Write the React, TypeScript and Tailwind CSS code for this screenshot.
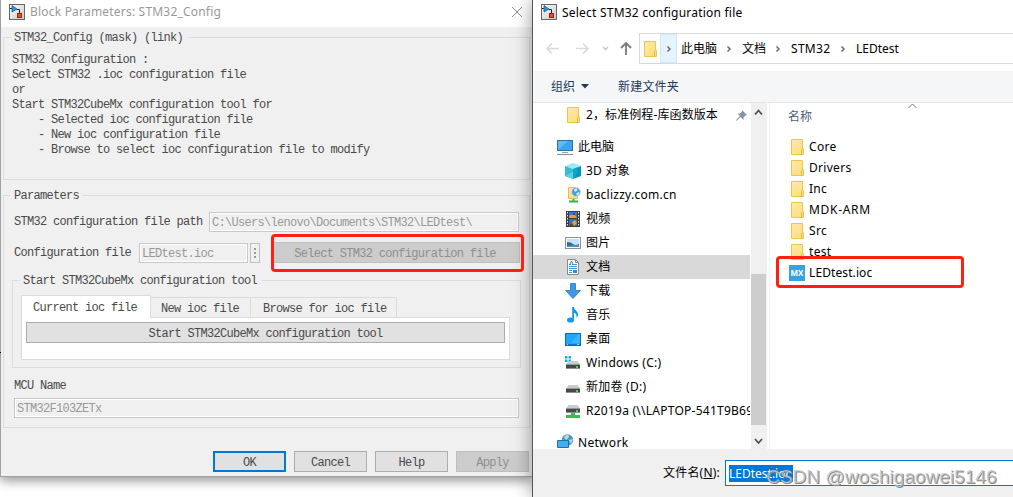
import React from 'react';
import clsx from 'clsx';

interface NavItem {
  label: string;
  icon: React.ReactNode;
}

interface FieldProps {
  value: string;
  className?: string;
}

interface ButtonProps {
  label: string;
  variant?: 'normal' | 'primary' | 'disabled';
  className?: string;
}

const SimulinkIcon = () => (
  <svg width="16" height="16" viewBox="0 0 16 16" className="shrink-0">
    <defs>
      <linearGradient id="sim" x1="0" y1="0" x2="1" y2="1">
        <stop offset="0" stopColor="#fff" />
        <stop offset="1" stopColor="#c4c8cc" />
      </linearGradient>
    </defs>
    <rect x=".5" y=".5" width="15" height="15" fill="url(#sim)" stroke="#666" />
    <path d="M1 4.500h2M8 5.500h2.500v4" fill="none" stroke="#222" />
    <path d="M3 1.500v6.500l5-3z" fill="#2e9bd6" stroke="#155a86" strokeWidth=".8" />
    <rect x="8.500" y="9.500" width="4" height="4" fill="#e8501e" stroke="#8c2a08" />
  </svg>
);

const FolderIcon = () => (
  <svg width="13" height="16" viewBox="0 0 13 16" className="shrink-0">
    <defs>
      <linearGradient id="folder" x1="0" y1="0" x2="1" y2="1">
        <stop offset="0" stopColor="#ffebaa" />
        <stop offset="1" stopColor="#fddb78" />
      </linearGradient>
    </defs>
    <path d="M.5.5h11v9h1v6H.5z" fill="url(#folder)" stroke="#ecc651" />
    <path d="M10.500 15.500v-5l1-1" fill="none" stroke="#e5b93c" />
  </svg>
);

const PcIcon = () => (
  <svg width="16" height="16" viewBox="0 0 16 16">
    <rect x=".5" y="1.500" width="15" height="10" fill="#5bbcf8" stroke="#33719c" />
    <path d="M1 11L11 2h4v9z" fill="#3aa6f2" />
    <path d="M5 13.500h6" stroke="#8ea3b1" />
    <path d="M0 15.500h16" stroke="#7d8f9d" />
  </svg>
);

const CubeIcon = () => (
  <svg width="16" height="16" viewBox="0 0 16 16">
    <path d="M0 3l8-3 8 3-8 3z" fill="#9deaf5" />
    <path d="M0 3l8 3v10l-8-3z" fill="#35bdd3" />
    <path d="M16 3L8 6v10l8-3z" fill="#0b95bd" />
    <path d="M8 6l4-1.500v6L8 16z" fill="#14a5c8" />
    <path d="M0 13l8-4v7z" fill="#5ad3e2" />
  </svg>
);

const NetFolderIcon = () => (
  <svg width="16" height="16" viewBox="0 0 16 16">
    <path d="M3.500.5h9v11h-9z" fill="#ffe391" stroke="#e5bd4b" />
    <circle cx="11" cy="5" r="4.500" fill="#4b9fd0" stroke="#cfe3ef" strokeWidth=".8" />
    <path d="M8.500 3l3-2 1 2-2 2zM11.500 6l3-1-1 3-2 .5z" fill="#d3edfb" />
    <path d="M4 14.500h9M8.500 12v3" stroke="#36b34a" strokeWidth="2" />
  </svg>
);

const VideoIcon = () => (
  <svg width="14" height="16" viewBox="0 0 14 16">
    <rect width="14" height="16" fill="#3b3b3b" />
    <path d="M1.500 1v14M12.500 1v14" stroke="#e8e8e8" strokeDasharray="1.500 1.500" />
    <rect x="3" y="1" width="8" height="6" fill="#4477cf" />
    <rect x="3" y="8" width="8" height="7" fill="#356ad0" />
    <path d="M4 4h5l2 3H3zM6 11l3-2 2 3-3 3z" fill="#dfa626" />
    <path d="M7 2h2v2H7zM4 13h3v2H4z" fill="#6a4520" />
  </svg>
);

const PictureIcon = () => (
  <svg width="16" height="16" viewBox="0 0 16 16">
    <rect x=".5" y="2.500" width="15" height="11" fill="#fff" stroke="#8a939b" />
    <rect x="2" y="4" width="12" height="8" fill="#c4e2f8" />
    <path d="M2 7q4 0 6 2t6 0v3H2z" fill="#336b8e" />
    <path d="M2 11q6-1.500 12-1v2H2z" fill="#4f93bf" />
  </svg>
);

const DocIcon = () => (
  <svg width="12" height="16" viewBox="0 0 12 16">
    <path d="M.5.5h8l3 3v12H.5z" fill="#fff" stroke="#848c92" />
    <path d="M8.500.5v3h3" fill="none" stroke="#848c92" />
    <path d="M2 5.500h2M5 5.500h5M2 7.500h8M2 9.500h8M2 11.500h3M2 13.500h3" stroke="#3d9ad8" />
    <path d="M3 5l1.500-3L6 5" fill="none" stroke="#2a86c8" />
    <rect x="6" y="11" width="4" height="3" fill="#438aa8" />
  </svg>
);

const DownloadIcon = () => (
  <svg width="16" height="16" viewBox="0 0 16 16">
    <path d="M5.500.5h5v7h5L8 15.500.5 7.500h5z" fill="#3e98e4" stroke="#2579c2" strokeWidth=".8" />
  </svg>
);

const MusicIcon = () => (
  <svg width="14" height="16" viewBox="0 0 14 16">
    <ellipse cx="4.500" cy="13" rx="3.500" ry="2.600" fill="#129bf4" />
    <path d="M6.200 0h1.800c0 3 4 4 4 7.500 0 1.500-.6 2.500-1.400 3.500.3-3-.7-4.500-2.600-5.300V13H6.200z" fill="#129bf4" />
  </svg>
);

const DesktopIcon = () => (
  <svg width="16" height="16" viewBox="0 0 16 16">
    <rect x=".5" y="2.500" width="15" height="12" fill="#1ea7fd" stroke="#0b6fb8" />
    <path d="M6 12l8-9h1v9z" fill="#3bb5ff" />
    <path d="M1 13.500h14" stroke="#0a79c9" />
    <path d="M2 13.500h1M12 13.500h2" stroke="#9fdcff" />
  </svg>
);

const DriveIcon = ({ kind }: { kind?: 'windows' | 'network' }) => (
  <svg width="16" height="16" viewBox="0 0 16 16">
    {kind === 'windows' && (
      <path d="M0 1h2.500v2.500H0zM3.500 1H6v2.500H3.500zM0 4.500h2.500V7H0zM3.500 4.500H6V7H3.500z" fill="#12b0ea" />
    )}
    <g transform={kind === 'network' ? 'translate(0 -4)' : undefined}>
      <path d="M3.500 6h9L15 9.500H1z" fill="#c9cccf" />
      <rect x="1" y="9.500" width="14" height="4.500" fill="#45494c" />
      <path d="M1 13.500h14" stroke="#8f9498" />
      <rect x="11" y="11" width="2" height="2" fill="#3de04a" />
    </g>
    {kind === 'network' && <path d="M6 10h4v2h5v3H1v-3h5z" fill="#43b84f" />}
  </svg>
);

const NetworkIcon = () => (
  <svg width="17" height="16" viewBox="0 0 17 16" className="-mt-[3px]">
    <circle cx="10.500" cy="7" r="5.800" fill="#5298bd" />
    <path d="M7 4l4-3 1 3-3 3zM12 7l4-1-2 5z" fill="#b6dcec" />
    <path d="M.5 7.500h11v7H.5z" fill="#43aef0" stroke="#246fa4" />
  </svg>
);

const Chevron = () => (
  <svg width="6" height="8" viewBox="0 0 6 8" className="shrink-0">
    <path d="M1.500 1.500L4 4 1.500 6.500" fill="none" stroke="#6d6d6d" strokeWidth="1.500" />
  </svg>
);

const navItems: NavItem[] = [
  { label: '3D 对象', icon: <CubeIcon /> },
  { label: 'baclizzy.com.cn', icon: <NetFolderIcon /> },
  { label: '视频', icon: <VideoIcon /> },
  { label: '图片', icon: <PictureIcon /> },
  { label: '文档', icon: <DocIcon /> },
  { label: '下载', icon: <DownloadIcon /> },
  { label: '音乐', icon: <MusicIcon /> },
  { label: '桌面', icon: <DesktopIcon /> },
  { label: 'Windows (C:)', icon: <DriveIcon kind="windows" /> },
  { label: '新加卷 (D:)', icon: <DriveIcon /> },
  { label: 'R2019a (\\\\LAPTOP-541T9B69', icon: <DriveIcon kind="network" /> },
];

const folders = ['Core', 'Drivers', 'Inc', 'MDK-ARM', 'Src', 'test'];

const description = `STM32 Configuration :
Select STM32 .ioc configuration file
or
Start STM32CubeMx configuration tool for
    - Selected ioc configuration file
    - New ioc configuration file
    - Browse to select ioc configuration file to modify`;

const Field = ({ value, className }: FieldProps) => (
  <div
    className={clsx(
      'h-5 border border-[#c8c8c8] bg-[#f0f0f0] pl-[2px] leading-[21px] text-[#999] shadow-[inset_0_0_0_1px_#fff]',
      className,
    )}
  >
    {value}
  </div>
);

const PushButton = ({ label, variant = 'normal', className }: ButtonProps) => (
  <button
    className={clsx(
      'flex h-[21px] justify-center',
      variant === 'normal' && 'border border-[#adadad] bg-[#e1e1e1] leading-[22px]',
      variant === 'primary' && 'border-2 border-[#0078d7] bg-[#e1e1e1] leading-[20px]',
      variant === 'disabled' && 'border border-[#bfbfbf] bg-[#cccccc] leading-[22px] text-[#8f8f8f]',
      className,
    )}
  >
    {label}
  </button>
);

const BlockParameters = () => (
  <div className="relative h-[477px] w-[532px] shrink-0 border-b border-l border-[#a0a0a0] bg-[#f0f0f0] shadow-[0_4px_10px_rgba(0,0,0,0.4)]">
    <div className="flex h-[27px] items-center bg-white pr-[9px] pb-1 pl-2">
      <SimulinkIcon />
      <span className="ml-[5px] flex-1 font-['Noto_Sans','Noto_Sans_CJK_SC',sans-serif] text-[12px] tracking-[0.2px] text-[#999]">
        Block Parameters: STM32_Config
      </span>
      <svg width="12" height="12" viewBox="0 0 12 12">
        <path d="M1 1l10 10M11 1L1 11" stroke="#8a8a8a" />
      </svg>
    </div>

    <div className="font-['Liberation_Mono',monospace] text-[12px] tracking-[-0.7px] text-[#4a4a4a]">
      <fieldset className="mt-[2px] ml-[2px] h-[151px] w-[527px] border border-[#dcdcdc]">
        <legend className="ml-[7px] h-[16px] pr-[5px] pl-[3px] leading-[18px]">STM32_Config (mask) (link)</legend>
        <pre className="mt-2 pl-2 font-[inherit] leading-[15px]">{description}</pre>
      </fieldset>

      <fieldset className="mt-[7px] ml-[2px] h-[241px] w-[527px] border border-[#dcdcdc]">
        <legend className="ml-[7px] h-[16px] pr-1 pl-[3px] leading-[18px]">Parameters</legend>
        <div className="mt-[9px] ml-[10px] flex h-5 items-center">
          <span className="w-[195px] leading-[20px]">STM32 configuration file path</span>
          <Field value="C:\Users\lenovo\Documents\STM32\LEDtest\" className="w-[310px]" />
        </div>
        <div className="mt-[10px] ml-[10px] flex h-[21px] items-center">
          <span className="w-[125px] leading-[20px]">Configuration file</span>
          <Field value="LEDtest.ioc" className="w-[109px]" />
          <div className="ml-[2px] flex h-5 w-[10px] flex-col items-center justify-center gap-[2px] border border-[#bfbfbf] bg-[#f0f0f0]">
            <i className="size-[2px] bg-[#999]" />
            <i className="size-[2px] bg-[#999]" />
            <i className="size-[2px] bg-[#999]" />
          </div>
          <PushButton
            label="Select STM32 configuration file"
            variant="disabled"
            className="ml-[13px] w-[247px] pr-[3px]"
          />
        </div>

        <fieldset className="mt-[9px] ml-2 h-[96px] w-[509px] border border-[#dcdcdc]">
          <legend className="ml-[7px] h-[16px] pr-[5px] pl-[3px] leading-[18px]">
            Start STM32CubeMx configuration tool
          </legend>
          <div className="mt-[7px] ml-2 flex h-[22px] items-end">
            <div className="z-10 -mb-px h-[23px] w-[130px] border border-b-0 border-[#dcdcdc] bg-white pl-[11px] leading-[24px]">
              Current ioc file
            </div>
            <div className="h-[20px] w-[100px] border border-b-0 border-l-0 border-[#dcdcdc] pl-[10px] leading-[22px]">
              New ioc file
            </div>
            <div className="h-[20px] w-[146px] border border-b-0 border-l-0 border-[#dcdcdc] pl-3 leading-[22px]">
              Browse for ioc file
            </div>
          </div>
          <div className="ml-2 h-[43px] w-[489px] border border-[#dcdcdc] bg-white pt-1 pl-1">
            <PushButton label="Start STM32CubeMx configuration tool" className="w-[479px]" />
          </div>
        </fieldset>

        <div className="mt-[9px] ml-[10px] leading-[18px]">MCU Name</div>
        <Field value="STM32F103ZETx" className="mt-[3px] ml-[10px] w-[505px]" />
      </fieldset>

      <div className="mt-[23px] ml-[212px] flex gap-2">
        <PushButton label="OK" variant="primary" className="w-[73px]" />
        <PushButton label="Cancel" className="w-[73px]" />
        <PushButton label="Help" className="w-[73px]" />
        <PushButton label="Apply" variant="disabled" className="w-[73px]" />
      </div>
    </div>
  </div>
);

const FileDialog = () => (
  <div className="relative z-10 flex h-[497px] w-[481px] shrink-0 flex-col border-l border-[#555] bg-white font-['Noto_Sans','Noto_Sans_CJK_SC',sans-serif] text-[12px] text-black shadow-[0_0_18px_rgba(0,0,0,0.4)]">
    <div className="flex h-[33px] items-start pt-1 pl-2">
      <SimulinkIcon />
      <span className="ml-[5px] leading-[18px] tracking-[0.22px]">Select STM32 configuration file</span>
    </div>

    <div className="flex h-[38px] items-start">
      <svg width="106" height="31" viewBox="0 0 106 31" fill="none" className="shrink-0">
        <path d="M14 15.500h12M19 10.500l-5 5 5 5M43 15.500h12M50 10.500l5 5-5 5" stroke="#dadada" strokeWidth="1.600" />
        <path d="M70 14l2.500 2.500L75 14" stroke="#c8c8c8" strokeWidth="1.400" />
        <path d="M93 22V10.500M88 15l5-5 5 5" stroke="#7a7a7a" strokeWidth="1.800" />
      </svg>
      <div className="flex h-[31px] flex-1 items-center border border-r-0 border-[#d9d9d9] pl-1">
        <FolderIcon />
        <div className="ml-[3px] flex h-[29px] w-[17px] items-center justify-center border border-[#cce8ff] bg-[#e5f3ff]">
          <Chevron />
        </div>
        <span className="ml-1 w-[45px]">此电脑</span>
        <Chevron />
        <span className="ml-[10px] w-[33px]">文档</span>
        <Chevron />
        <span className="ml-[10px] w-[49px] tracking-[0.3px]">STM32</span>
        <Chevron />
        <span className="ml-[10px]">LEDtest</span>
      </div>
    </div>

    <div className="flex h-8 shrink-0 items-center border-b border-[#e5e5e5] bg-[#f5f6f7] pl-[18px] text-[#1e395b]">
      <span>组织</span>
      <svg width="8" height="5" viewBox="0 0 8 5" className="ml-[6px]">
        <path d="M0 0h8L4 4.500z" fill="#1e395b" />
      </svg>
      <span className="ml-[29px] tracking-[0.2px]">新建文件夹</span>
    </div>

    <div className="flex h-[346px] shrink-0">
      <div className="h-full w-[217px] overflow-hidden">
        <div className="flex h-6 items-center pl-[34px]">
          <FolderIcon />
          <span className="ml-[6px] w-[150px] tracking-[0.1px]">2，标准例程-库函数版本</span>
          <svg width="11" height="11" viewBox="0 0 11 11">
            <path d="M6 0l5 5-1.500.5-2 2V10L4.500 7 1 10.500 0 10.800.5 9.500 4 6 1.500 3.500H4l2-2z" fill="#8594a2" />
          </svg>
        </div>
        <div className="mt-2 flex h-6 items-center pl-6">
          <PcIcon />
          <span className="ml-[5px]">此电脑</span>
        </div>
        {navItems.map((item) => (
          <div
            key={item.label}
            className={clsx('flex h-6 items-center pl-8 whitespace-nowrap', item.label === '文档' && 'bg-[#d9d9d9]')}
          >
            <span className="flex w-4 shrink-0 justify-center">{item.icon}</span>
            <span className="ml-[5px] tracking-[0.25px]">{item.label}</span>
          </div>
        ))}
        <div className="mt-2 flex h-[22px] items-center pl-6">
          <NetworkIcon />
          <span className="ml-1 pt-[2px] leading-[16px] tracking-[0.3px]">Network</span>
        </div>
      </div>

      <div className="ml-px flex w-4 flex-col items-center bg-[#f0f0f0]">
        <svg width="16" height="171" viewBox="0 0 16 171" fill="none" stroke="#505050" strokeWidth="1.800">
          <path d="M4 11.500l3.500-4 3.500 4" />
        </svg>
        <div className="h-[151px] w-full border-r border-[#f0f0f0] bg-[#cdcdcd]" />
        <svg width="16" height="24" viewBox="0 0 16 24" fill="none" stroke="#505050" strokeWidth="1.800">
          <path d="M4 14l3.500 4 3.500-4" />
        </svg>
      </div>

      <div className="ml-[2px] flex-1 border-l border-[#f2f2f2]">
        <svg width="9" height="6" viewBox="0 0 9 6" className="ml-[138px]">
          <path d="M.5 5l4-4 4 4" fill="none" stroke="#777" />
        </svg>
        <div className="ml-[18px] leading-[16px] text-[#4c607a]">名称</div>
        <div className="mt-[11px]">
          {folders.map((name) => (
            <div key={name} className="flex h-[21px] items-center pl-[21px]">
              <FolderIcon />
              <span className={clsx('ml-[5px]', name === 'MDK-ARM' ? 'tracking-[0.7px]' : 'tracking-[0.3px]')}>
                {name}
              </span>
            </div>
          ))}
          <div className="flex h-[21px] items-center pl-[19px]">
            <span className="flex size-4 items-center justify-center bg-[#35a4dc] font-['Open_Sans',sans-serif] text-[8px] font-bold text-white">
              MX
            </span>
            <span className="ml-1 tracking-[0.1px]">LEDtest.ioc</span>
          </div>
        </div>
      </div>
    </div>

    <div className="flex h-12 shrink-0 items-start bg-[#f0f0f0] pt-[11px] pl-[130px]">
      <span className="w-[62px] leading-[26px] tracking-[0.2px]">
        文件名(<span className="underline">N</span>):
      </span>
      <div className="flex h-[26px] flex-1 items-center border border-r-0 border-[#0078d7] bg-white pl-[3px]">
        <span className="h-[17px] w-[64px] bg-[#0078d7] leading-[17px] text-white">LEDtest.ioc</span>
      </div>
    </div>
  </div>
);

export default function App() {
  return (
    <div className="relative flex h-[497px] w-[1013px] overflow-hidden bg-white">
      <BlockParameters />
      <FileDialog />

      {/* Highlights and watermark over both windows */}
      <div className="absolute top-[234px] left-[271px] z-20 h-[38px] w-[253px] rounded-[4px] border-3 border-[#ff2012]" />
      <div className="absolute top-[256px] left-[776px] z-20 h-[32px] w-[188px] rounded-[4px] border-3 border-[#ff2012]" />
      <div className="absolute top-[352px] left-0 z-20 h-px w-px bg-black" />
      <div className="absolute top-[466px] left-[766px] z-20 font-['Liberation_Sans',sans-serif] text-[19px] leading-[22px] tracking-[0.05px] whitespace-nowrap text-[#c4c4c4]/80 [text-shadow:1px_1px_0_#8a8a8a]">
        CSDN @woshigaowei5146
      </div>
    </div>
  );
}
